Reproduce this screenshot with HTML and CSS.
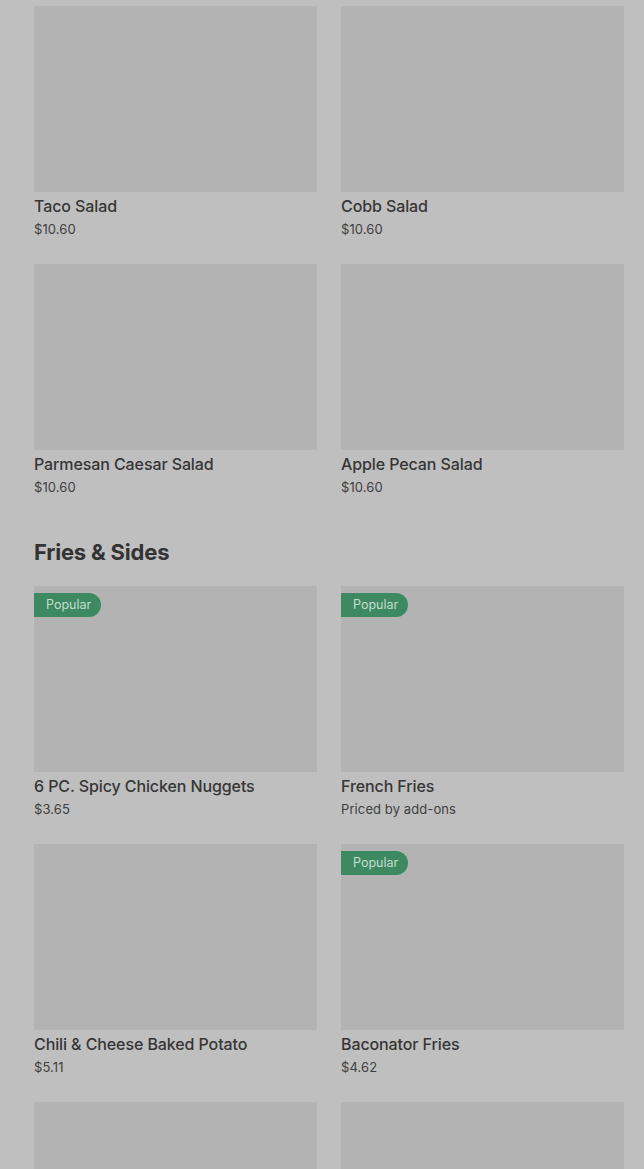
FILE: index.html
```html
<!DOCTYPE html>
<html>
<head>
<meta charset="utf-8">
<link rel="stylesheet" href="styles.css">
</head>
<body>
<main class="page">
  <section class="grid">
    <div class="card"><div class="thumb"></div><div class="name">Taco Salad</div><div class="price">$10.60</div></div>
    <div class="card"><div class="thumb"></div><div class="name">Cobb Salad</div><div class="price">$10.60</div></div>
    <div class="card"><div class="thumb"></div><div class="name">Parmesan Caesar Salad</div><div class="price">$10.60</div></div>
    <div class="card"><div class="thumb"></div><div class="name">Apple Pecan Salad</div><div class="price">$10.60</div></div>
  </section>
  <h2 class="heading">Fries &amp; Sides</h2>
  <section class="grid">
    <div class="card"><div class="thumb"><span class="badge">Popular</span></div><div class="name">6 PC. Spicy Chicken Nuggets</div><div class="price">$3.65</div></div>
    <div class="card"><div class="thumb"><span class="badge">Popular</span></div><div class="name">French Fries</div><div class="price">Priced by add-ons</div></div>
    <div class="card"><div class="thumb"></div><div class="name">Chili &amp; Cheese Baked Potato</div><div class="price">$5.11</div></div>
    <div class="card"><div class="thumb"><span class="badge">Popular</span></div><div class="name">Baconator Fries</div><div class="price">$4.62</div></div>
    <div class="card"><div class="thumb"></div><div class="name"></div><div class="price"></div></div>
    <div class="card"><div class="thumb"></div><div class="name"></div><div class="price"></div></div>
  </section>
</main>
</body>
</html>
```
FILE: styles.css
```css
html, body {
  margin: 0;
  padding: 0;
  background: #bfbfbf;
}
body {
  font-family: Inter, "Noto Sans", sans-serif;
  color: #363636;
  overflow: hidden;
  height: 1169px;
}
.page {
  padding: 6px 20px 0 34px;
}
.grid {
  display: grid;
  grid-template-columns: 283px 283px;
  column-gap: 24px;
  row-gap: 26px;
}
.card {
  display: flex;
  flex-direction: column;
  height: 232px;
}
.thumb {
  position: relative;
  height: 186px;
  background: #b3b3b3;
  flex: none;
}
.badge {
  position: absolute;
  left: 0;
  top: 7px;
  height: 24px;
  width: 67px;
  box-sizing: border-box;
  padding-left: 12px;
  background: #3d8a62;
  color: #c4ddcf;
  font-size: 12.5px;
  line-height: 24px;
  border-radius: 0 12px 12px 0;
}
.name {
  margin-top: 4px;
  font-size: 16px;
  font-weight: 500;
  line-height: 20px;
  letter-spacing: -0.1px;
  color: #363636;
  white-space: nowrap;
}
.price {
  margin-top: 4px;
  font-size: 13px;
  line-height: 18px;
  letter-spacing: 0.1px;
  color: #404040;
}
.heading {
  margin: 42px 0 20px;
  font-size: 22px;
  line-height: 28px;
  font-weight: 700;
  letter-spacing: -0.2px;
  color: #333333;
}
```
